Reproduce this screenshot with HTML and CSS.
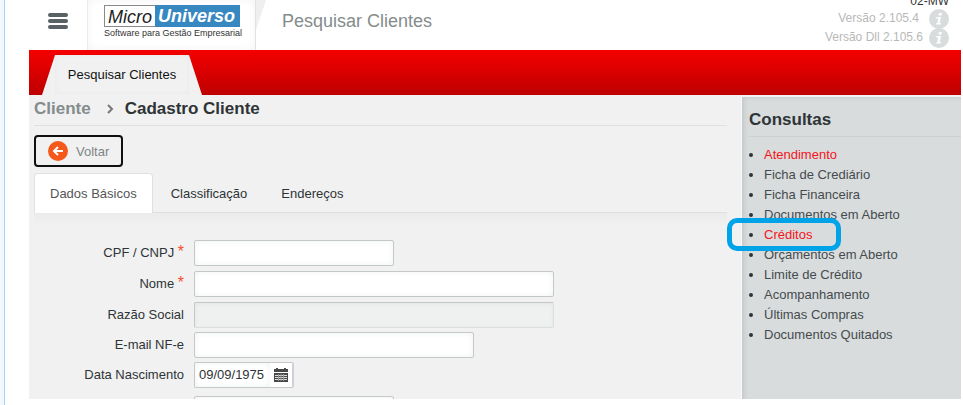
FILE: index.html
```
<!DOCTYPE html>
<html lang="pt-BR">
<head>
    <meta charset="UTF-8">
    <meta name="viewport" content="width=device-width, initial-scale=1.0">
    <title>Pesquisar Clientes</title>
    <link rel="stylesheet" href="styles.css">
</head>
<body>
    <div class="app">
        <header class="topbar">
            <button class="menu-button" type="button" aria-label="Menu">
                <svg width="20" height="16" viewBox="0 0 20 16">
                    <rect width="20" height="4" rx="2"/>
                    <rect y="6" width="20" height="4" rx="2"/>
                    <rect y="12" width="20" height="4" rx="2"/>
                </svg>
            </button>
            <div class="brand">
                <div class="logo">
                    <span class="logo-micro">Micro</span>
                    <span class="logo-universo">Universo</span>
                </div>
                <div class="slogan">Software para Gestão Empresarial</div>
            </div>
            <div class="notch"></div>
            <div class="page-title">Pesquisar Clientes</div>
            <div class="versions">
                <div class="station">02-MW</div>
                <div class="version">
                    <span class="version-text">Versão 2.105.4</span>
                    <svg class="info-icon" width="20" height="20" viewBox="0 0 20 20">
                        <circle cx="10" cy="10" r="10"/>
                        <path d="M10 4h3l-.6 2.600h-3zM7.500 8h4.500l-1.300 6h1.300l-.4 1.600H7.100l.4-1.600h.9l.9-4.400H7.100z"/>
                    </svg>
                </div>
                <div class="version">
                    <span class="version-text version-dll">Versão Dll 2.105.6</span>
                    <svg class="info-icon" width="20" height="20" viewBox="0 0 20 20">
                        <circle cx="10" cy="10" r="10"/>
                        <path d="M10 4h3l-.6 2.600h-3zM7.500 8h4.500l-1.300 6h1.300l-.4 1.600H7.100l.4-1.600h.9l.9-4.400H7.100z"/>
                    </svg>
                </div>
            </div>
        </header>

        <nav class="page-tabs">
            <a class="page-tab" href="#"><span>Pesquisar Clientes</span></a>
        </nav>

        <div class="body">
            <main class="content">
                <h1 class="breadcrumb">
                    <a href="#">Cliente</a>
                    <svg width="8" height="10" viewBox="0 0 8 10">
                        <path d="M2 1l4 4-4 4"/>
                    </svg>
                    <span>Cadastro Cliente</span>
                </h1>

                <button class="back-button" type="button">
                    <svg width="20" height="20" viewBox="0 0 20 20">
                        <circle cx="10" cy="10" r="10"/>
                        <path d="M15 10H6.500M10 6l-4 4 4 4"/>
                    </svg>
                    Voltar
                </button>

                <div class="tabs">
                    <button class="tab active" type="button">Dados Básicos</button>
                    <button class="tab" type="button">Classificação</button>
                    <button class="tab" type="button">Endereços</button>
                </div>

                <form class="form">
                    <div class="field required">
                        <label for="cpf">CPF / CNPJ <sup>*</sup></label>
                        <input class="medium" id="cpf" type="text">
                    </div>
                    <div class="field required">
                        <label for="nome">Nome <sup>*</sup></label>
                        <input class="wide" id="nome" type="text">
                    </div>
                    <div class="field">
                        <label for="razao">Razão Social</label>
                        <input class="wide" id="razao" type="text" disabled>
                    </div>
                    <div class="field">
                        <label for="email">E-mail NF-e</label>
                        <input class="large" id="email" type="text">
                    </div>
                    <div class="field last">
                        <label for="nascimento">Data Nascimento</label>
                        <div class="date-box">
                            <input id="nascimento" type="text" value="09/09/1975">
                            <button type="button" aria-label="Calendário">
                                <svg width="14" height="14" viewBox="0 0 14 14">
                                    <path d="M0 1h2V0h2v1h6V0h2v1h2v3H0z"/>
                                    <path d="M0 5h14v9H0z"/>
                                    <path class="grid" d="M1 7.500h12M1 9.500h12M1 11.500h12"/>
                                    <path class="grid-light" d="M4.500 6v7M7 6v7M9.500 6v7"/>
                                </svg>
                            </button>
                        </div>
                    </div>
                    <div class="field">
                        <label></label>
                        <input class="medium" type="text" aria-label="Complemento">
                    </div>
                </form>
            </main>

            <aside class="sidebar">
                <h2>Consultas</h2>
                <ul>
                    <li><a class="alert" href="#">Atendimento</a></li>
                    <li><a href="#">Ficha de Crediário</a></li>
                    <li><a href="#">Ficha Financeira</a></li>
                    <li><a href="#">Documentos em Aberto</a></li>
                    <li class="marked"><a class="alert" href="#">Créditos</a></li>
                    <li><a href="#">Orçamentos em Aberto</a></li>
                    <li><a href="#">Limite de Crédito</a></li>
                    <li><a href="#">Acompanhamento</a></li>
                    <li><a href="#">Últimas Compras</a></li>
                    <li><a href="#">Documentos Quitados</a></li>
                </ul>
            </aside>
        </div>
    </div>
</body>
</html>
```
FILE: styles.css
```
:root {
    --text: #2e3436;
    --muted: #848c8c;
    --page: #f1f1f1;
    --line: #e0e0e0;
    --side: #d8dcdd;
    --field-border: #c4c8c9;
}

*,
*::before,
*::after {
    box-sizing: border-box;
}

body {
    margin: 0;
    height: 100vh;
    overflow: hidden;
    padding: 0 2px 6px 4px;
    background: linear-gradient(to right, #f3f8fd 4px, #fff 4px);
    font-family: "Liberation Sans", Arial, sans-serif;
    font-size: 13px;
    color: var(--text);
}

a {
    color: inherit;
    text-decoration: none;
}

button,
input {
    font: inherit;
    color: inherit;
}

button {
    padding: 0;
    border: 0;
    background: none;
    cursor: pointer;
}

body::before {
    content: "";
    position: fixed;
    top: 0;
    bottom: 0;
    left: 4px;
    width: 1px;
    background: #a3d3f7;
}

.app {
    display: flex;
    flex-direction: column;
    height: 100%;
    margin-left: 25px;
    overflow: hidden;
}

/* Top bar */
.topbar {
    display: flex;
    flex: none;
    height: 50px;
}

.menu-button {
    width: 58px;
    padding-bottom: 8px;
}

.menu-button svg {
    display: block;
    margin: 0 auto;
    fill: #596164;
}

.brand {
    width: 169px;
    padding: 5px 15px 0 16px;
    border-left: 1px solid #ececec;
    border-right: 1px solid #e2e2e2;
    box-shadow: inset 0 0 8px #f3f3f3;
}

.logo {
    display: flex;
    height: 22px;
    border: 1px solid #8a8a8a;
    font-size: 18px;
    line-height: 22px;
    font-style: italic;
}

.logo-micro {
    width: 51px;
    padding-left: 3px;
    color: #222;
}

.logo-universo {
    flex: 1;
    margin: -1px;
    padding-left: 3px;
    background: #3787c0;
    color: #fff;
    font-weight: bold;
}

.slogan {
    font-size: 9px;
    line-height: 12px;
    color: #333;
    white-space: nowrap;
}

.notch {
    width: 10px;
    height: 30px;
    background: #efefef;
    clip-path: polygon(0 0, 100% 0, 0 100%);
}

.page-title {
    margin-left: 16px;
    font-size: 18px;
    line-height: 42px;
    color: var(--muted);
}

.versions {
    margin-left: auto;
    padding-right: 12px;
    font-size: 12px;
    text-align: right;
    color: #b8b8b8;
}

.station {
    height: 9px;
    line-height: 2px;
    color: #333;
}

.version {
    display: flex;
    justify-content: flex-end;
    height: 19px;
    line-height: 19px;
}

.version-text {
    margin-right: 10px;
}

.version-dll {
    margin-right: 6px;
}

.info-icon {
    flex: none;
    fill: #d8dcdd;
}

.info-icon path {
    fill: #fff;
}

/* Red strip with the open page */
.page-tabs {
    flex: none;
    height: 45px;
    padding: 5px 13px 0;
    background: linear-gradient(#f40000, #be0000);
}

.page-tab {
    display: block;
    width: 160px;
    height: 40px;
    padding: 0 13px;
    background: var(--page);
    clip-path: polygon(13px 0, 147px 0, 100% 100%, 0 100%);
    line-height: 39px;
    text-align: center;
    color: #111;
}

.page-tab span {
    display: block;
    box-shadow: inset 0 0 5px #e8e8e8;
}

/* Page body */
.body {
    display: flex;
    flex: 1;
    min-height: 0;
    background: var(--page);
}

.content {
    flex: 1;
    padding: 0 14px 0 5px;
}

.breadcrumb {
    display: flex;
    align-items: center;
    margin: 0 0 9px;
    height: 31px;
    padding-bottom: 3px;
    border-bottom: 1px solid var(--line);
    font-size: 17px;
}

.breadcrumb a {
    color: var(--muted);
}

.breadcrumb svg {
    margin: 0 11px 0 15px;
    fill: none;
    stroke: #777;
    stroke-width: 2;
}

.back-button {
    display: flex;
    align-items: center;
    gap: 8px;
    height: 32px;
    padding: 0 12px;
    border: 2px solid #101010;
    border-radius: 4px;
    color: #7d8585;
}

.back-button svg {
    fill: #f4581b;
}

.back-button path {
    fill: none;
    stroke: #fff;
    stroke-width: 2;
}

.tabs {
    display: flex;
    height: 40px;
    margin-top: 6px;
    border-bottom: 1px solid var(--line);
}

.tab {
    height: 40px;
    padding: 0 17px;
}

.tab.active {
    margin-right: 1px;
    padding: 0 15px;
    border: 1px solid var(--line);
    border-bottom: 0;
    border-radius: 4px 4px 0 0;
    background: #fff;
    color: #555;
}

/* Form */
.form {
    padding-top: 27px;
    background: linear-gradient(#ebebeb, var(--page) 12px);
}

.field {
    display: flex;
    gap: 10px;
    height: 26px;
    margin-bottom: 4px;
    line-height: 26px;
}

.field.required {
    margin-bottom: 5px;
}

.field.last {
    margin-bottom: 8px;
}

.field label {
    width: 150px;
    text-align: right;
}

.field sup {
    font-size: 16px;
    line-height: 0;
    vertical-align: 0;
    color: #f4502c;
}

.field input {
    height: 26px;
    padding: 0 4px;
    border: 1px solid var(--field-border);
    border-radius: 2px;
    background: #fff;
    box-shadow: inset 0 0 6px #eef1f1;
}

.field input:disabled {
    border-color: #c4c8c9 #dadede #dadede #c4c8c9;
    background: #eff1f0;
    box-shadow: inset 0 1px 4px #e2e5e4;
}

.field .medium {
    width: 200px;
}

.field .large {
    width: 280px;
}

.field .wide {
    width: 360px;
}

.date-box {
    display: flex;
    width: 100px;
    border: 1px solid var(--field-border);
    border-right: 2px solid #cdd1da;
    border-radius: 2px;
    background: #fff;
}

.date-box input {
    width: 75px;
    height: 24px;
    border: 0;
}

.date-box button {
    margin-left: 4px;
}

.date-box svg {
    display: block;
    fill: #484848;
}

.date-box .grid {
    stroke: #ddd;
    stroke-width: 1;
}

.date-box .grid-light {
    stroke: #999;
    stroke-width: 1;
}

/* Side menu */
.sidebar {
    width: 220px;
    margin-top: 2px;
    padding: 9px 0 0 7px;
    border-left: 1px solid #fafafa;
    background: var(--side);
    box-shadow: inset 4px 2px 5px -2px #c2c6c7;
}

.sidebar h2 {
    margin: 0 0 8px;
    height: 31px;
    border-bottom: 1px solid #cbd0d1;
    font-size: 17px;
    line-height: 28px;
}

.sidebar ul {
    margin: 0;
    padding-left: 15px;
}

.sidebar li {
    position: relative;
    line-height: 20px;
}

.sidebar a {
    color: #454b4d;
}

.sidebar a.alert {
    color: #f5141b;
}

/* Highlight drawn over the neighbouring lines */
.marked::after {
    content: "";
    position: absolute;
    z-index: 1;
    top: -7px;
    left: -37px;
    width: 114px;
    height: 33px;
    border: 5px solid #00a2e8;
    border-radius: 10px;
    pointer-events: none;
}
```
